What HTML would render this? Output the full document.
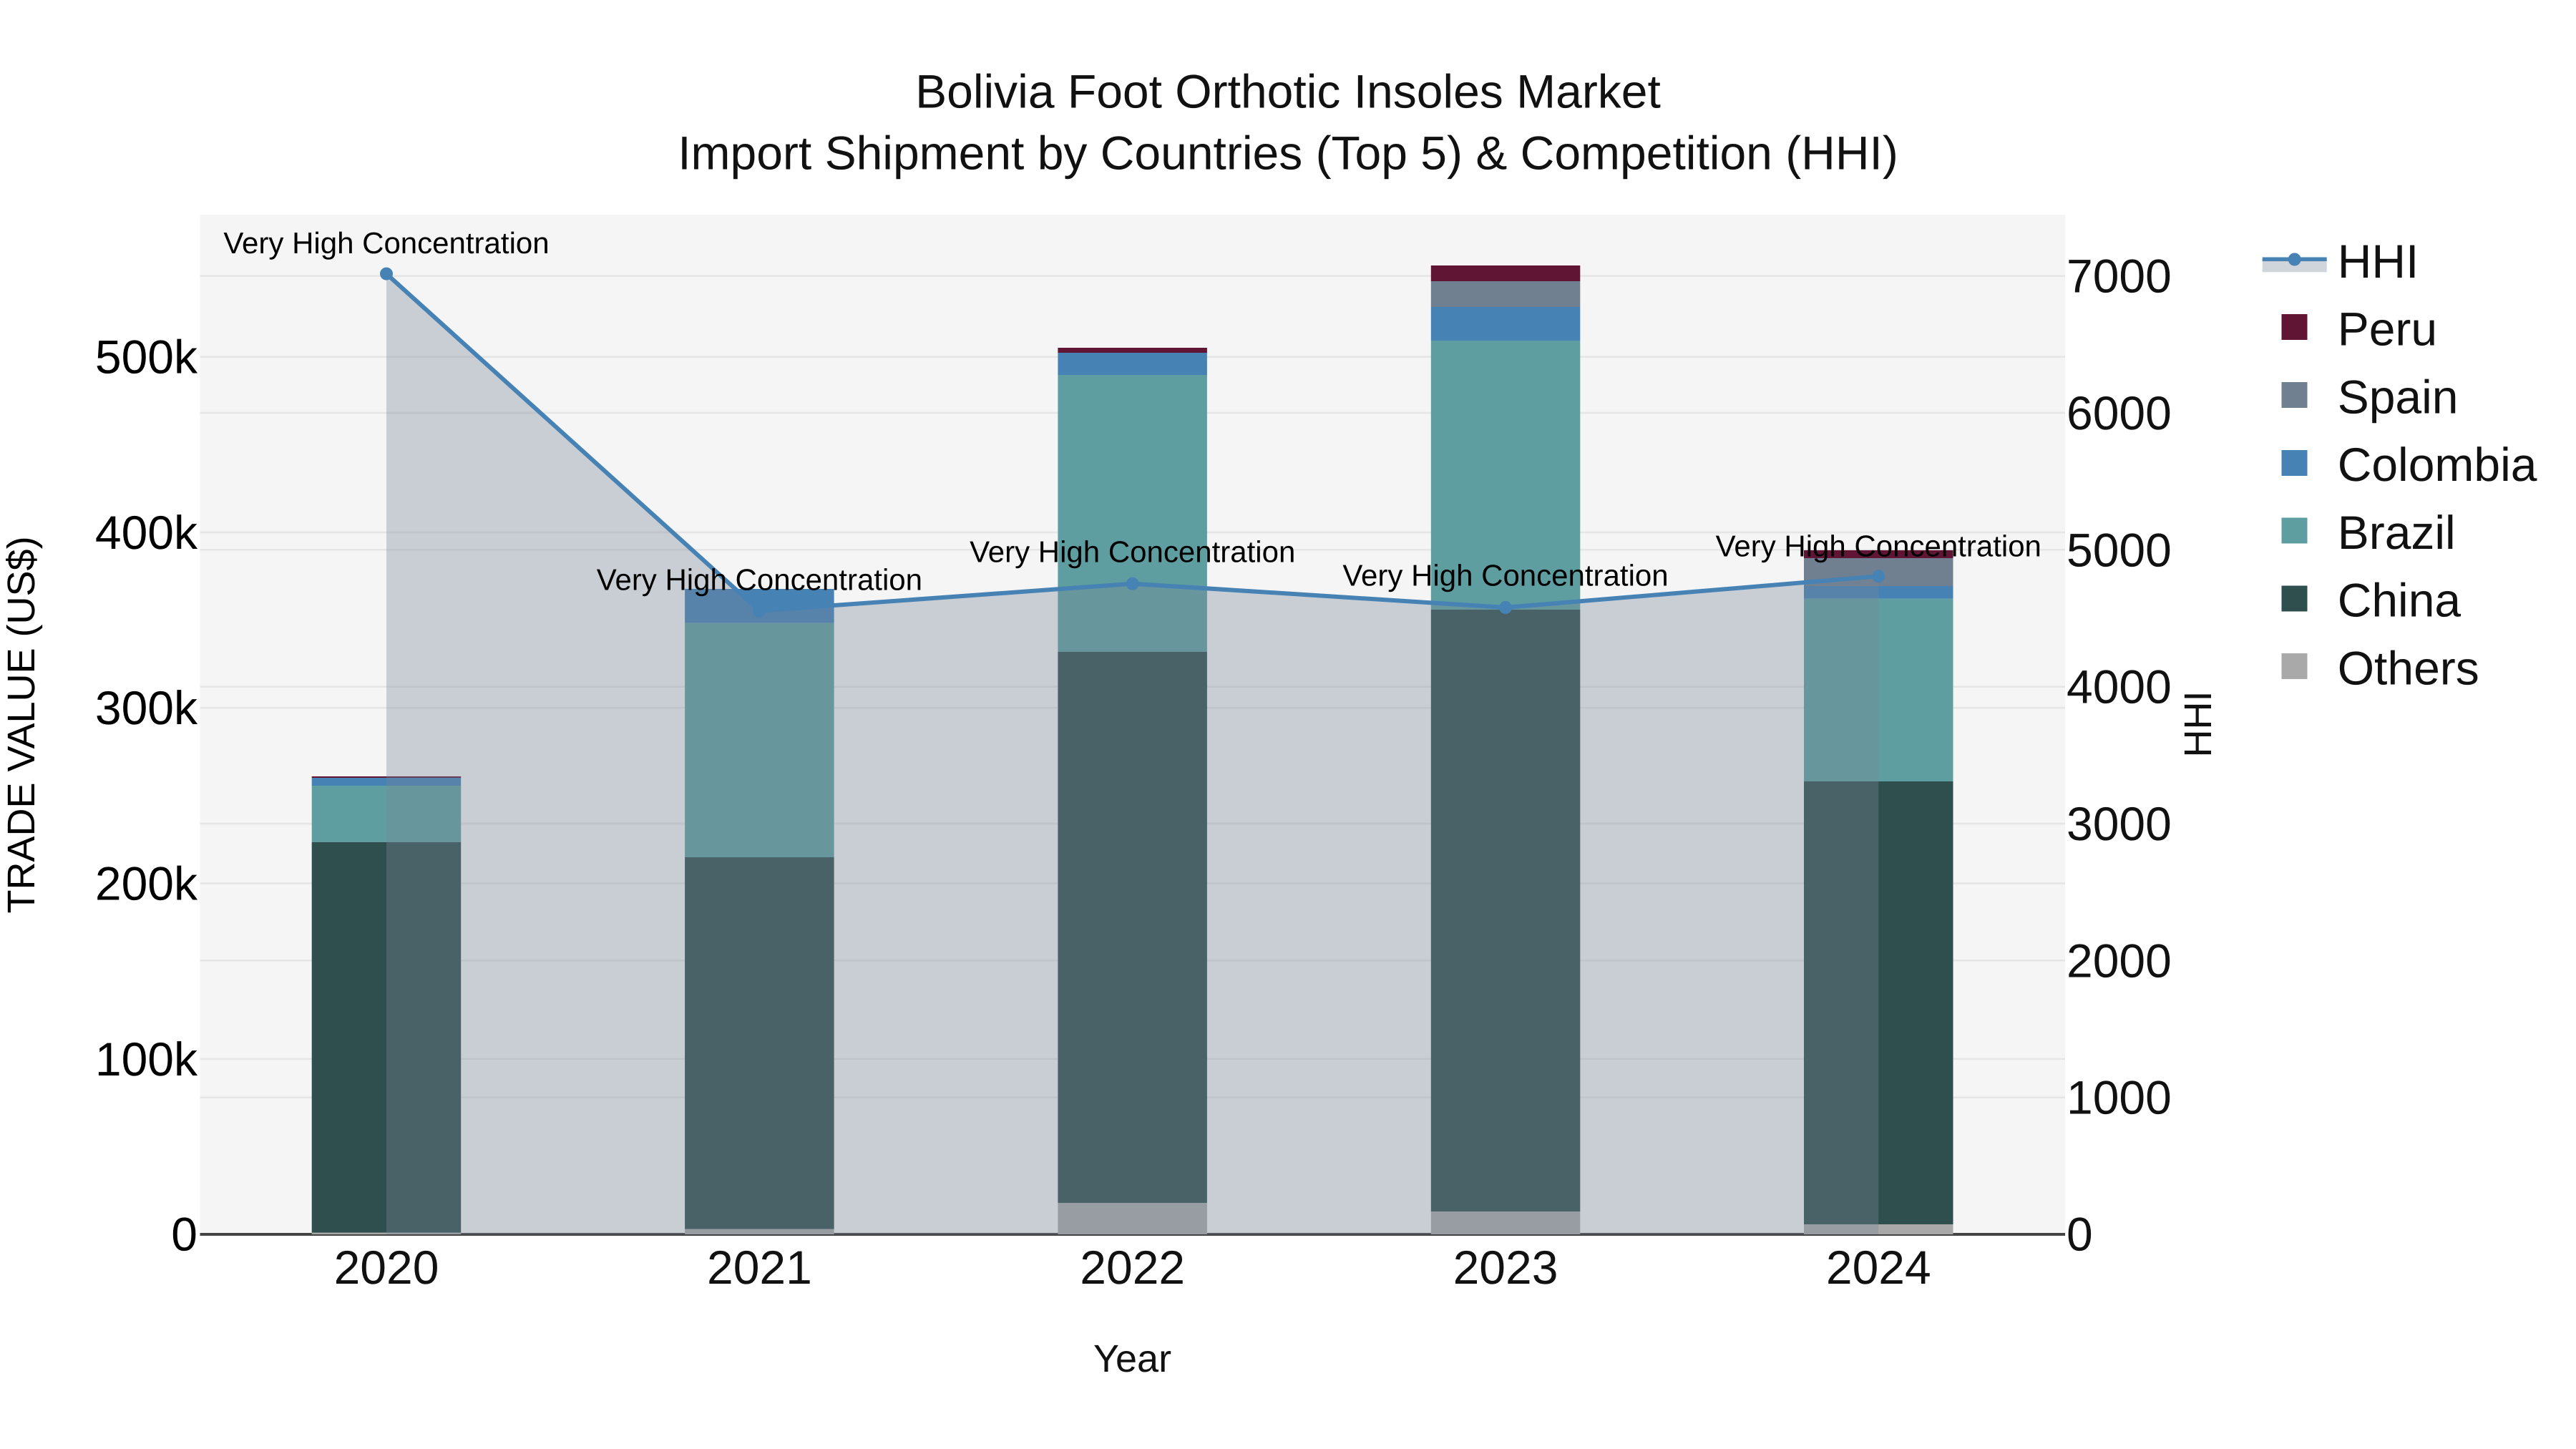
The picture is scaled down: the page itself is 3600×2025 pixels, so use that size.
<!DOCTYPE html>
<html>
<head>
<meta charset="utf-8">
<style>
html,body{margin:0;padding:0;background:#fff;width:3600px;height:2025px;overflow:hidden}
svg{display:block}
text{font-family:"Liberation Sans",Arial,sans-serif;text-rendering:geometricPrecision}
</style>
</head>
<body>
<svg width="3600" height="2025" viewBox="0 0 3600 2025" xmlns="http://www.w3.org/2000/svg">
<rect width="3600" height="2025" fill="#fff"/>
<rect x="279.5" y="300" width="2606.5" height="1425" fill="#f5f5f5"/>

<!-- grid -->
<g stroke="#e6e6e6" stroke-width="2.7" fill="none">
<path d="M279.5 498.7H2886M279.5 744H2886M279.5 989.2H2886M279.5 1234.5H2886M279.5 1479.8H2886"/>
<path d="M279.5 385.7H2886M279.5 577H2886M279.5 768.4H2886M279.5 959.7H2886M279.5 1151H2886M279.5 1342.3H2886M279.5 1533.7H2886"/>
</g>

<!-- zero line -->
<rect x="279.5" y="1723" width="2606.5" height="4" fill="#444"/>

<!-- bars 2020 -->
<g>
<rect x="435.7" y="1722.6" width="208.5" height="2.4" fill="#a9a9a9"/>
<rect x="435.7" y="1176.7" width="208.5" height="545.9" fill="#2f4f4f"/>
<rect x="435.7" y="1098" width="208.5" height="78.7" fill="#5f9ea0"/>
<rect x="435.7" y="1087" width="208.5" height="11" fill="#4682b4"/>
<rect x="435.7" y="1085" width="208.5" height="2" fill="#601535"/>
</g>
<!-- bars 2021 -->
<g>
<rect x="957.1" y="1717.6" width="208.5" height="7.4" fill="#a9a9a9"/>
<rect x="957.1" y="1198" width="208.5" height="519.6" fill="#2f4f4f"/>
<rect x="957.1" y="870.7" width="208.5" height="327.3" fill="#5f9ea0"/>
<rect x="957.1" y="823" width="208.5" height="47.7" fill="#4682b4"/>
</g>
<!-- bars 2022 -->
<g>
<rect x="1478.4" y="1681" width="208.5" height="44" fill="#a9a9a9"/>
<rect x="1478.4" y="910.7" width="208.5" height="770.3" fill="#2f4f4f"/>
<rect x="1478.4" y="524" width="208.5" height="386.7" fill="#5f9ea0"/>
<rect x="1478.4" y="493" width="208.5" height="31" fill="#4682b4"/>
<rect x="1478.4" y="486" width="208.5" height="7" fill="#601535"/>
</g>
<!-- bars 2023 -->
<g>
<rect x="1999.8" y="1693" width="208.5" height="32" fill="#a9a9a9"/>
<rect x="1999.8" y="852" width="208.5" height="841" fill="#2f4f4f"/>
<rect x="1999.8" y="476" width="208.5" height="376" fill="#5f9ea0"/>
<rect x="1999.8" y="429" width="208.5" height="47" fill="#4682b4"/>
<rect x="1999.8" y="393" width="208.5" height="36" fill="#708090"/>
<rect x="1999.8" y="371" width="208.5" height="22" fill="#601535"/>
</g>
<!-- bars 2024 -->
<g>
<rect x="2521" y="1711" width="208.5" height="14" fill="#a9a9a9"/>
<rect x="2521" y="1092" width="208.5" height="619" fill="#2f4f4f"/>
<rect x="2521" y="836.7" width="208.5" height="255.3" fill="#5f9ea0"/>
<rect x="2521" y="819" width="208.5" height="17.7" fill="#4682b4"/>
<rect x="2521" y="780" width="208.5" height="39" fill="#708090"/>
<rect x="2521" y="769" width="208.5" height="11" fill="#601535"/>
</g>

<!-- HHI area -->
<path d="M540 1725V382.6L1061.4 853.6L1582.7 815.7L2104 849L2625.3 805.3V1725Z" fill="rgb(120,135,152)" fill-opacity="0.35"/>
<!-- HHI line -->
<path d="M540 382.6L1061.4 853.6L1582.7 815.7L2104 849L2625.3 805.3" fill="none" stroke="#4682b4" stroke-width="6" stroke-linejoin="round"/>
<g fill="#4682b4">
<circle cx="540" cy="382.6" r="9"/>
<circle cx="1061.4" cy="853.6" r="9"/>
<circle cx="1582.7" cy="815.7" r="9"/>
<circle cx="2104" cy="849" r="9"/>
<circle cx="2625.3" cy="805.3" r="9"/>
</g>

<!-- annotations -->
<g font-size="42" fill="#000" text-anchor="middle">
<text x="540" y="354">Very High Concentration</text>
<text x="1061.4" y="824.3">Very High Concentration</text>
<text x="1582.7" y="785.7">Very High Concentration</text>
<text x="2104" y="818.3">Very High Concentration</text>
<text x="2625.3" y="777.3">Very High Concentration</text>
</g>

<!-- title -->
<g font-size="66" fill="#111" text-anchor="middle">
<text x="1800" y="150.7">Bolivia Foot Orthotic Insoles Market</text>
<text x="1800" y="236.5">Import Shipment by Countries (Top 5) &amp; Competition (HHI)</text>
</g>

<!-- left ticks -->
<g font-size="66" fill="#000" text-anchor="end">
<text x="276" y="521.7">500k</text>
<text x="276" y="767">400k</text>
<text x="276" y="1012.2">300k</text>
<text x="276" y="1257.5">200k</text>
<text x="276" y="1502.8">100k</text>
<text x="276" y="1747.7">0</text>
</g>

<!-- right ticks -->
<g font-size="66" fill="#111">
<text x="2888" y="408.7">7000</text>
<text x="2888" y="600">6000</text>
<text x="2888" y="791.4">5000</text>
<text x="2888" y="982.7">4000</text>
<text x="2888" y="1174">3000</text>
<text x="2888" y="1365.3">2000</text>
<text x="2888" y="1556.7">1000</text>
<text x="2888" y="1747.7">0</text>
</g>

<!-- x ticks -->
<g font-size="66" fill="#111" text-anchor="middle">
<text x="540" y="1794">2020</text>
<text x="1061.4" y="1794">2021</text>
<text x="1582.7" y="1794">2022</text>
<text x="2104" y="1794">2023</text>
<text x="2625.3" y="1794">2024</text>
</g>

<!-- axis titles -->
<text x="1582.5" y="1917" font-size="54" fill="#111" text-anchor="middle">Year</text>
<text transform="translate(48 1013) rotate(-90)" font-size="54" fill="#000" text-anchor="middle">TRADE VALUE (US$)</text>
<text transform="translate(3090 1012) rotate(-90)" font-size="54" fill="#111" text-anchor="middle">HHI</text>

<!-- legend -->
<rect x="3161.7" y="362.3" width="90" height="18" fill="rgb(120,135,152)" fill-opacity="0.35"/>
<rect x="3161.7" y="359.5" width="90" height="5.6" fill="#4682b4"/>
<circle cx="3206.7" cy="362.5" r="9" fill="#4682b4"/>
<rect x="3188.5" y="439" width="36" height="36" fill="#601535"/>
<rect x="3188.5" y="534" width="36" height="36" fill="#708090"/>
<rect x="3188.5" y="629" width="36" height="36" fill="#4682b4"/>
<rect x="3188.5" y="723.5" width="36" height="36" fill="#5f9ea0"/>
<rect x="3188.5" y="818.5" width="36" height="36" fill="#2f4f4f"/>
<rect x="3188.5" y="913" width="36" height="36" fill="#a9a9a9"/>
<g font-size="66" fill="#111">
<text x="3266.7" y="388">HHI</text>
<text x="3266.7" y="482.5">Peru</text>
<text x="3266.7" y="577.5">Spain</text>
<text x="3266.7" y="672">Colombia</text>
<text x="3266.7" y="767">Brazil</text>
<text x="3266.7" y="861.6">China</text>
<text x="3266.7" y="956.6">Others</text>
</g>
</svg>
</body>
</html>
